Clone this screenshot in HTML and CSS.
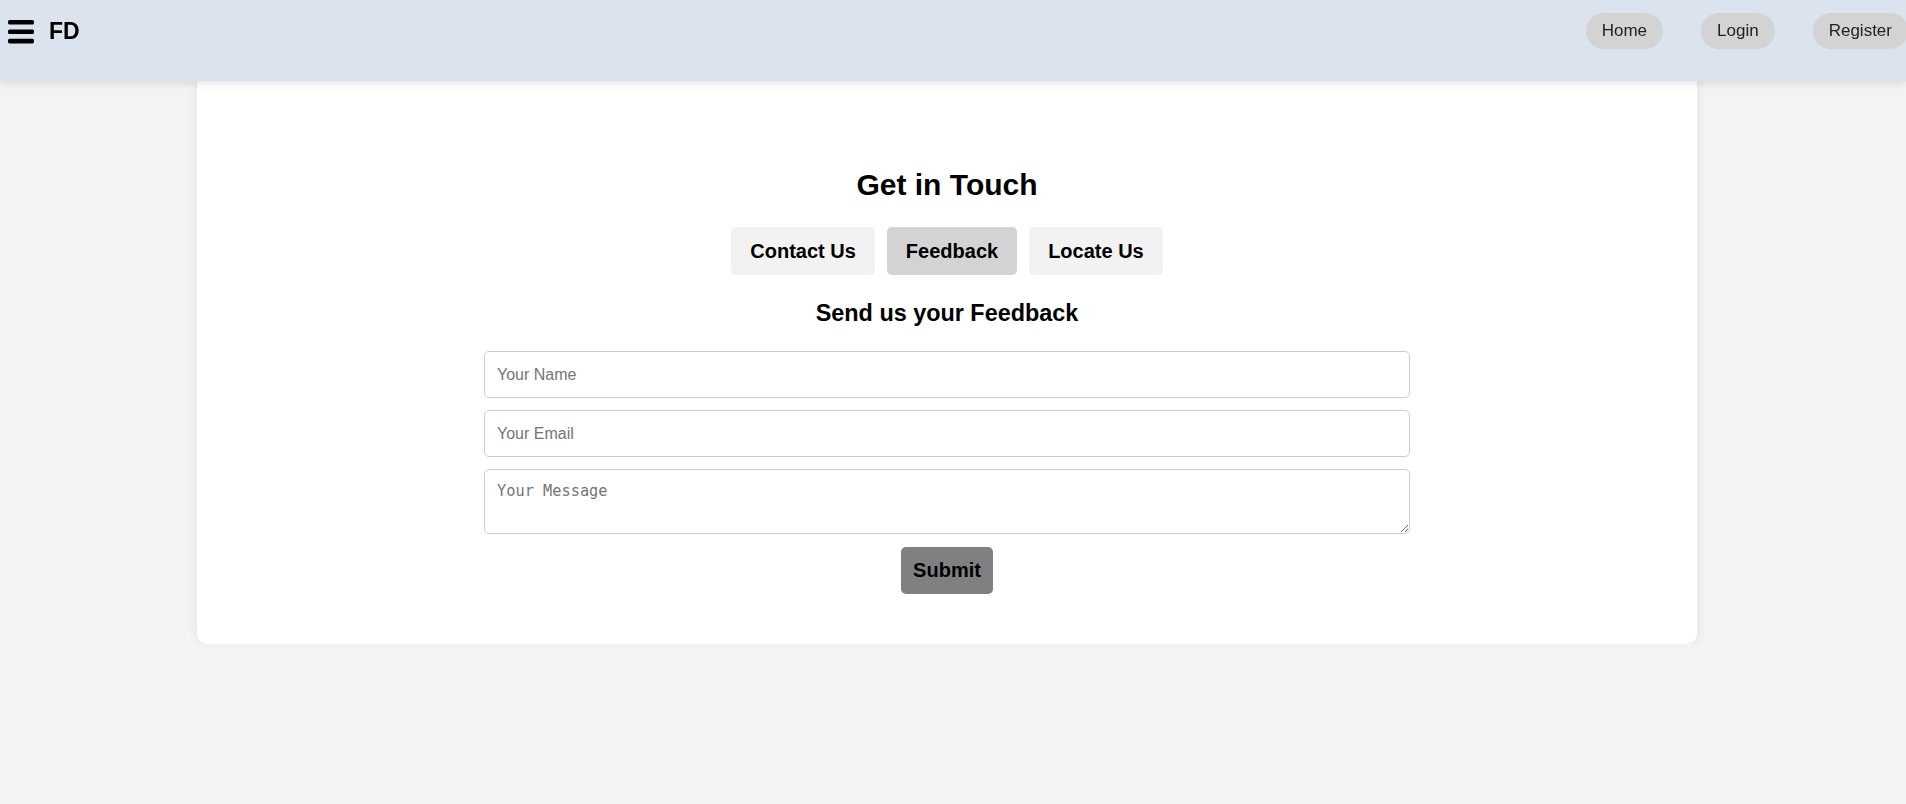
FILE: index.html
```html
<!DOCTYPE html>
<html lang="en">
<head>
<meta charset="utf-8">
<title>Get in Touch</title>
<link rel="stylesheet" href="styles.css">
</head>
<body>
<header class="topbar">
  <div class="brand">
    <svg class="menu-icon" width="26" height="24" viewBox="0 0 26 24" aria-hidden="true">
      <rect x="0" y="0" width="26" height="4.6" rx="1.6" fill="#000"/>
      <rect x="0" y="9.4" width="26" height="4.6" rx="1.6" fill="#000"/>
      <rect x="0" y="18.8" width="26" height="4.6" rx="1.6" fill="#000"/>
    </svg>
    <span class="logo">FD</span>
  </div>
  <nav class="nav">
    <a class="pill" href="#">Home</a>
    <a class="pill" href="#">Login</a>
    <a class="pill" href="#">Register</a>
  </nav>
</header>

<div class="page">
  <main class="card">
    <h2 class="title">Get in Touch</h2>
    <div class="tabs">
      <button class="tab">Contact Us</button>
      <button class="tab active">Feedback</button>
      <button class="tab">Locate Us</button>
    </div>
    <h3 class="subtitle">Send us your Feedback</h3>
    <form class="form">
      <input class="field" type="text" placeholder="Your Name">
      <input class="field" type="email" placeholder="Your Email">
      <textarea class="field area" placeholder="Your Message"></textarea>
      <button class="submit" type="button">Submit</button>
    </form>
  </main>
</div>
</body>
</html>
```

FILE: styles.css
```css
html, body {
  margin: 0;
  padding: 0;
}
body {
  background: #f3f3f3;
  font-family: "Liberation Sans", Arial, sans-serif;
  color: #000;
  overflow: hidden;
}

.topbar {
  position: fixed;
  top: 0;
  left: 0;
  width: 1906px;
  height: 81px;
  box-sizing: border-box;
  background: #dbe4ee;
  box-shadow: 0 2px 8px rgba(0, 0, 0, 0.12);
  display: flex;
  justify-content: space-between;
  align-items: flex-start;
  padding: 13px 0 0 8px;
  z-index: 10;
}
.brand {
  display: flex;
  align-items: center;
  gap: 15px;
  height: 36px;
}
.menu-icon {
  display: block;
  margin-top: 1px;
}
.logo {
  font-weight: bold;
  font-size: 23px;
  line-height: 36px;
}
.nav {
  display: flex;
  gap: 38px;
  margin-right: -2px;
}
.pill {
  display: block;
  background: #d3d3d3;
  color: #222;
  text-decoration: none;
  font-size: 17px;
  line-height: 36px;
  height: 36px;
  padding: 0 16px;
  border-radius: 18px;
}

.page {
  width: 1894px;
}
.card {
  width: 1500px;
  box-sizing: border-box;
  margin: 40px auto 0;
  background: #fff;
  border-radius: 10px;
  box-shadow: 0 0 10px rgba(0, 0, 0, 0.08);
  padding: 127px 20px 50px;
  display: flex;
  flex-direction: column;
  align-items: center;
}
.title {
  margin: 0;
  font-size: 30px;
  line-height: 36px;
  font-weight: bold;
}
.tabs {
  display: flex;
  gap: 12px;
  margin-top: 24px;
}
.tab {
  font-family: "Liberation Sans", Arial, sans-serif;
  font-size: 20px;
  font-weight: bold;
  line-height: 24px;
  padding: 12px 19px;
  border: none;
  border-radius: 5px;
  background: #f2f2f2;
  color: #000;
}
.tab.active {
  background: #d3d3d3;
}
.subtitle {
  margin: 24px 0 0;
  font-size: 23.4px;
  line-height: 28px;
  font-weight: bold;
}
.form {
  width: 926px;
  margin-top: 24px;
  display: flex;
  flex-direction: column;
  align-items: center;
  gap: 12px;
}
.field {
  width: 100%;
  box-sizing: border-box;
  height: 47px;
  border: 1px solid #ccc;
  border-radius: 5px;
  padding: 12px;
  font-family: "Liberation Sans", Arial, sans-serif;
  font-size: 16px;
  color: #000;
  background: #fff;
  margin: 0;
}
.field::placeholder {
  color: #757575;
}
.area {
  height: 65px;
  font-family: "DejaVu Sans Mono", "Liberation Mono", monospace;
  font-size: 15.3px;
  padding: 12px;
  resize: vertical;
}
.submit {
  margin-top: 1px;
  font-family: "Liberation Sans", Arial, sans-serif;
  font-size: 20px;
  font-weight: bold;
  line-height: 23px;
  padding: 12px;
  border: none;
  border-radius: 5px;
  background: #808080;
  color: #000;
}
```
